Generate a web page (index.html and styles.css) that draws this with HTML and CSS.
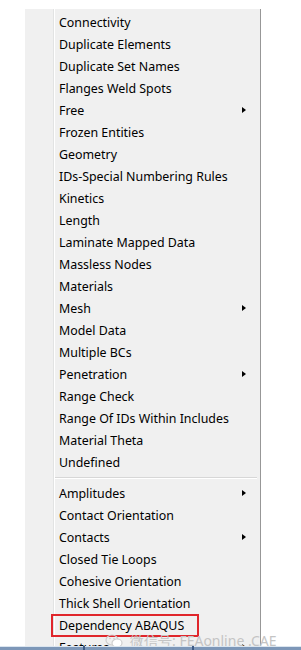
FILE: index.html
```html
<!DOCTYPE html>
<html lang="en">
<head>
  <meta charset="UTF-8">
  <meta name="viewport" content="width=device-width, initial-scale=1.0">
  <link rel="stylesheet" href="styles.css">
</head>
<body>
  <div class="screen">
    <ul class="menu">
      <li class="item">Connectivity</li>
      <li class="item">Duplicate Elements</li>
      <li class="item">Duplicate Set Names</li>
      <li class="item">Flanges Weld Spots</li>
      <li class="item sub">Free</li>
      <li class="item">Frozen Entities</li>
      <li class="item">Geometry</li>
      <li class="item">IDs-Special Numbering Rules</li>
      <li class="item">Kinetics</li>
      <li class="item">Length</li>
      <li class="item">Laminate Mapped Data</li>
      <li class="item">Massless Nodes</li>
      <li class="item">Materials</li>
      <li class="item sub">Mesh</li>
      <li class="item">Model Data</li>
      <li class="item">Multiple BCs</li>
      <li class="item sub">Penetration</li>
      <li class="item">Range Check</li>
      <li class="item">Range Of IDs Within Includes</li>
      <li class="item">Material Theta</li>
      <li class="item">Undefined</li>
      <li class="separator"></li>
      <li class="item sub">Amplitudes</li>
      <li class="item">Contact Orientation</li>
      <li class="item sub">Contacts</li>
      <li class="item">Closed Tie Loops</li>
      <li class="item">Cohesive Orientation</li>
      <li class="item">Thick Shell Orientation</li>
      <li class="item marked">Dependency ABAQUS</li>
      <li class="item sub">Features</li>
    </ul>

    <div class="watermark">
      <svg class="wechat" width="18" height="14" viewBox="0 0 18 14">
        <ellipse cx="7" cy="6" rx="6" ry="5" fill="none" stroke="#cfcfcf" stroke-width="1.2"/>
        <ellipse cx="12" cy="9" rx="5" ry="4" fill="#fff" stroke="#cfcfcf" stroke-width="1.2"/>
        <circle cx="5" cy="4.5" r="0.8" fill="#cfcfcf"/>
        <circle cx="9" cy="4.5" r="0.8" fill="#cfcfcf"/>
      </svg>
      <span>微信号: FEAonline .CAE</span>
    </div>

    <div class="taskbar">
      <div class="task first"></div>
      <div class="task"></div>
      <div class="task last"></div>
    </div>
  </div>
</body>
</html>
```

FILE: styles.css
```css
:root {
  --menu-bg: #f0f0f0;
  --menu-border: #979797;
  --text-color: #000;
  --mark-color: #e0262b;
}

body {
  margin: 0;
  background: #fff;
  font-family: "Noto Sans", "Open Sans", sans-serif;
  font-size: 12.4px;
  color: var(--text-color);
}

.screen {
  position: relative;
  width: 301px;
  height: 650px;
  overflow: hidden;
}

.menu {
  list-style: none;
  margin: 9px 0 0 25px;
  padding: 2px 0;
  width: 235px;
  border-right: 1px solid var(--menu-border);
  background: linear-gradient(to right,
    var(--menu-bg) 28px,
    #e2e3e3 28px 29px,
    #fff 29px 30px,
    var(--menu-bg) 30px);
}

.item {
  position: relative;
  display: flex;
  align-items: center;
  justify-content: space-between;
  height: 22px;
  padding: 0 14px 0 34px;
  white-space: nowrap;
}

.item.sub::after {
  content: "";
  border-style: solid;
  border-width: 3.5px 0 3.5px 4px;
  border-color: transparent transparent transparent #000;
}

.item.marked::after {
  content: "";
  position: absolute;
  left: 26px;
  top: 0;
  width: 144px;
  height: 19px;
  border: 2px solid var(--mark-color);
}

.separator {
  height: 9px;
  margin-left: 30px;
  margin-right: 3px;
  background: linear-gradient(to bottom,
    transparent 4px,
    #d7d7d7 4px 5px,
    #fff 5px 6px,
    transparent 6px);
}

.watermark {
  position: absolute;
  left: 105px;
  top: 631px;
  display: flex;
  align-items: center;
  gap: 7px;
  color: #c4c4c4;
  font-size: 14px;
}

.taskbar {
  position: absolute;
  left: 0;
  right: 0;
  bottom: 0;
  height: 4px;
  display: flex;
  background: linear-gradient(to bottom, #dbe5ef 1px, #7d97b8 1px);
}

.task {
  flex: 1;
  border-right: 2px solid #3c5a85;
}

.task.first {
  flex: 0 0 83px;
}

.task.last {
  border-right: none;
}
```
